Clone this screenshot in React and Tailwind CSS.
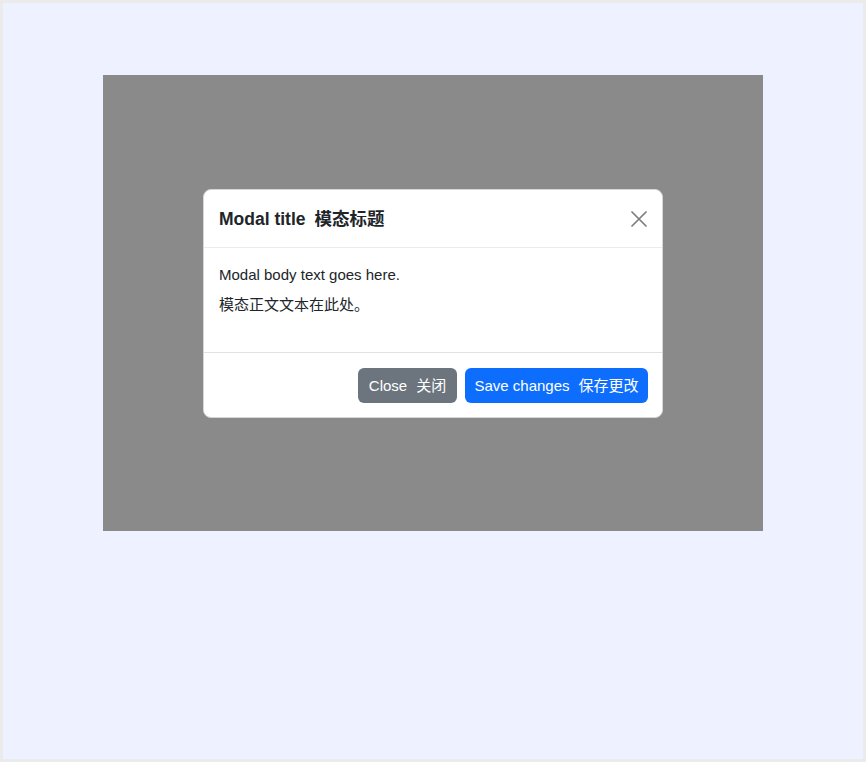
import React from "react";

export default function App() {
  return (
    <div className="min-h-[762px] w-full border-[3px] border-[#ebebeb] bg-[#eef1ff] pt-[72px] flex justify-center font-['Liberation_Sans','Noto_Sans_CJK_SC',sans-serif] text-[#212529]">
      <div className="w-[660px] h-[456px] bg-[#8a8a8a] flex items-center justify-center">
        <div className="w-[460px] bg-white rounded-lg border border-[#d6d6d6] flex flex-col overflow-hidden">
          <div className="h-[58px] border-b border-[#e9ecef] px-[15px] flex items-center justify-between">
            <h5 className="text-[17.5px] font-semibold leading-[27px] pt-[3px]">
              Modal title<span className="ml-[9px]">模态标题</span>
            </h5>
            <button className="w-4 h-4 mt-[2px] flex items-center justify-center" aria-label="Close">
              <svg width="16" height="16" viewBox="0 0 16 16" fill="none" stroke="#7d7d7d" strokeWidth="1.7" strokeLinecap="round">
                <path d="M1 1L15 15M15 1L1 15" />
              </svg>
            </button>
          </div>
          <div className="h-[104px] px-[15px] pt-[16px] text-[15px] leading-[22.5px]">
            <p className="mb-[7.5px]">Modal body text goes here.</p>
            <p>模态正文文本在此处。</p>
          </div>
          <div className="h-[65px] border-t border-[#dee2e6] px-[14px] pt-[1px] flex items-center justify-end gap-2">
            <button className="w-[99px] h-[35px] rounded-md bg-[#6c757d] text-white text-[15px] pt-[2px] flex items-center justify-center">
              Close<span className="ml-[9px]">关闭</span>
            </button>
            <button className="w-[183px] h-[35px] rounded-md bg-[#0d6efd] text-white text-[15px] pt-[2px] flex items-center justify-center">
              Save changes<span className="ml-[9px]">保存更改</span>
            </button>
          </div>
        </div>
      </div>
    </div>
  );
}
